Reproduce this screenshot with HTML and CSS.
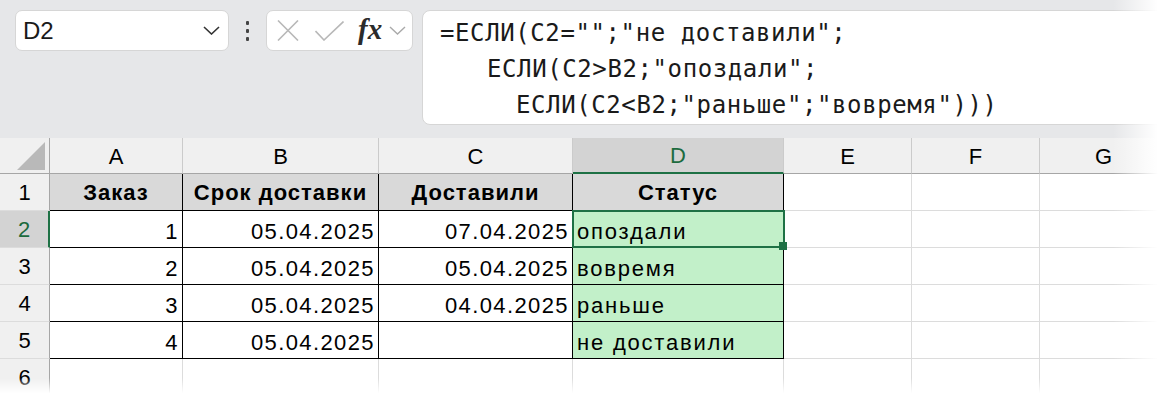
FILE: index.html
```html
<!DOCTYPE html>
<html lang="ru">
  <head>
    <meta charset="UTF-8" />
    <title>Статус доставки</title>
    <link rel="stylesheet" href="styles.css">
  </head>
  <body>
    <!-- formula bar -->
    <div class="toolbar">
      <div class="namebox">
        <span class="cellref">D2</span>
        <svg class="chev" width="17" height="9" viewBox="0 0 17 9"><polyline points="1,1 8.5,8 16,1" fill="none" stroke="#333" stroke-width="1.6"/></svg>
      </div>
      <div class="more"><span></span><span></span><span></span></div>
      <div class="fxbox">
        <svg class="ico-x" width="22" height="21" viewBox="0 0 22 21"><path d="M1 0.5 L21 20.5 M21 0.5 L1 20.5" stroke="#b8b8b8" stroke-width="1.6" fill="none"/></svg>
        <svg class="ico-ok" width="29" height="20" viewBox="0 0 29 20"><polyline points="0.5,10 9,19 28.5,0.5" fill="none" stroke="#b8b8b8" stroke-width="1.6"/></svg>
        <span class="fx">fx</span>
        <svg class="chev-sm" width="17" height="9" viewBox="0 0 17 9"><polyline points="1,1 8.5,8 16,1" fill="none" stroke="#aaa" stroke-width="1.4"/></svg>
      </div>
      <div class="formula">
        <div class="fline">=ЕСЛИ(C2="";"не доставили";</div>
        <div class="fline lvl1">ЕСЛИ(C2&gt;B2;"опоздали";</div>
        <div class="fline lvl2">ЕСЛИ(C2&lt;B2;"раньше";"вовремя")))</div>
      </div>
    </div>

    <!-- sheet -->
    <div class="sheet">
      <div class="hd corner">
        <svg width="29" height="28" viewBox="0 0 29 28"><polygon points="28,0 28,28 0,28" fill="#b9b9b9"/></svg>
      </div>
      <div class="hd col">A</div>
      <div class="hd col">B</div>
      <div class="hd col">C</div>
      <div class="hd col active-col">D</div>
      <div class="hd col">E</div>
      <div class="hd col">F</div>
      <div class="hd col">G</div>

      <div class="hd row">1</div>
      <div class="c tb title">Заказ</div>
      <div class="c tb title">Срок доставки</div>
      <div class="c tb title">Доставили</div>
      <div class="c tb title">Статус</div>
      <div class="c"></div>
      <div class="c"></div>
      <div class="c"></div>

      <div class="hd row active-row">2</div>
      <div class="c tb num">1</div>
      <div class="c tb num">05.04.2025</div>
      <div class="c tb num">07.04.2025</div>
      <div class="c tb ok selected">опоздали</div>
      <div class="c"></div>
      <div class="c"></div>
      <div class="c"></div>

      <div class="hd row">3</div>
      <div class="c tb num">2</div>
      <div class="c tb num">05.04.2025</div>
      <div class="c tb num">05.04.2025</div>
      <div class="c tb ok">вовремя</div>
      <div class="c"></div>
      <div class="c"></div>
      <div class="c"></div>

      <div class="hd row">4</div>
      <div class="c tb num">3</div>
      <div class="c tb num">05.04.2025</div>
      <div class="c tb num">04.04.2025</div>
      <div class="c tb ok">раньше</div>
      <div class="c"></div>
      <div class="c"></div>
      <div class="c"></div>

      <div class="hd row">5</div>
      <div class="c tb num">4</div>
      <div class="c tb num">05.04.2025</div>
      <div class="c tb num"></div>
      <div class="c tb ok">не доставили</div>
      <div class="c"></div>
      <div class="c"></div>
      <div class="c"></div>

      <div class="hd row">6</div>
      <div class="c"></div>
      <div class="c"></div>
      <div class="c"></div>
      <div class="c"></div>
      <div class="c"></div>
      <div class="c"></div>
      <div class="c"></div>
    </div>

    <div class="fade-right"></div>
    <div class="fade-bottom"></div>
  </body>
</html>
```

FILE: styles.css
```css
body {
  margin: 0;
  width: 1163px;
  height: 396px;
  overflow: hidden;
  position: relative;
  background: #fff;
  font-family: "Liberation Sans", Arial, sans-serif;
  color: #000;
}
.toolbar {
  display: flex;
  align-items: flex-start;
  box-sizing: border-box;
  height: 138px;
  padding: 10px 0 0 15px;
  background: #e6e7e9;
  overflow: hidden;
}
.namebox {
  display: flex;
  align-items: center;
  justify-content: space-between;
  box-sizing: border-box;
  width: 214px;
  height: 41px;
  padding: 0 8px 0 7px;
  background: #fff;
  border: 1px solid #d6d6d6;
  border-radius: 7px;
}
.cellref {
  font-size: 24px;
  color: #1a1a1a;
}
.more {
  width: 37px;
  height: 41px;
  display: flex;
  flex-direction: column;
  align-items: center;
  justify-content: center;
  gap: 4px;
}
.more span {
  width: 3px;
  height: 4px;
  background: #444;
  border-radius: 1px;
}
.fxbox {
  display: flex;
  align-items: center;
  box-sizing: border-box;
  width: 147px;
  height: 41px;
  padding-left: 10px;
  background: #fff;
  border: 1px solid #d6d6d6;
  border-radius: 7px;
}
.ico-ok {
  margin-left: 16px;
}
.fx {
  margin-left: 14px;
  font-family: "Liberation Serif", "DejaVu Serif", serif;
  font-style: italic;
  font-weight: bold;
  font-size: 29px;
  color: #2b2b2b;
  line-height: 1;
  margin-bottom: 2px;
}
.chev-sm {
  margin-left: 7px;
}
.formula {
  flex: 1;
  box-sizing: border-box;
  height: 115px;
  margin-left: 9px;
  margin-right: -12px;
  padding: 4px 0 0 17px;
  background: #fff;
  border: 1px solid #d6d6d6;
  border-radius: 8px;
  font-family: "DejaVu Sans Mono", "Liberation Mono", monospace;
  font-size: 24px;
  letter-spacing: 0.6px;
  color: #1a1a1a;
}
.fline {
  height: 36px;
  line-height: 36px;
  white-space: pre;
}
.lvl1 {
  padding-left: 47px;
}
.lvl2 {
  padding-left: 76px;
}

/* grid */
.sheet {
  display: grid;
  grid-template-columns: 50px 133px 196px 194px 211px 128px 128px 128px;
  grid-template-rows: 36px repeat(6, 37px);
  width: 1168px;
}
.hd {
  box-sizing: border-box;
  display: flex;
  align-items: center;
  justify-content: center;
  background: #f0f0f0;
  font-size: 22px;
  padding-top: 2px;
}
.corner {
  justify-content: flex-end;
  align-items: flex-end;
  padding: 0 3px 3px 0;
  border-right: 1px solid #a6a6a6;
  border-bottom: 1px solid #a6a6a6;
}
.col {
  border-right: 1px solid #cbcbcb;
  border-bottom: 1px solid #a6a6a6;
}
.row {
  border-right: 1px solid #a6a6a6;
  border-bottom: 1px solid #dcdcdc;
}
.active-col {
  background: #d3d3d3;
  color: #1c6b3e;
  border-bottom: 2px solid #1e7145;
}
.active-row {
  background: #d3d3d3;
  color: #1c6b3e;
  border-right: 2px solid #1e7145;
}
.c {
  box-sizing: border-box;
  display: flex;
  align-items: center;
  padding: 5px 4px 0 4px;
  border-right: 1px solid #dcdcdc;
  border-bottom: 1px solid #dcdcdc;
  font-size: 22px;
  letter-spacing: 1.4px;
  white-space: nowrap;
}
.tb {
  border-right-color: #000;
  border-bottom-color: #000;
}
.title {
  justify-content: center;
  padding-top: 2px;
  background: #d9d9d9;
  font-weight: bold;
  letter-spacing: 1px;
}
.num {
  justify-content: flex-end;
  padding-right: 3px;
}
.ok {
  background: #c2f0c9;
  letter-spacing: 1.8px;
}
.selected {
  position: relative;
}
.selected::after {
  content: "";
  position: absolute;
  top: -1px;
  left: -1px;
  right: -2px;
  bottom: -1px;
  border: 2px solid #1e7145;
}
.selected::before {
  content: "";
  position: absolute;
  right: -4px;
  bottom: -3px;
  width: 8px;
  height: 8px;
  background: #1e7145;
  z-index: 2;
}

/* edge fades of the screenshot */
.fade-right {
  position: absolute;
  top: 0;
  right: 0;
  width: 50px;
  height: 396px;
  background: linear-gradient(to right, rgba(255, 255, 255, 0), #fff 90%);
}
.fade-bottom {
  position: absolute;
  left: 0;
  right: 0;
  bottom: 0;
  height: 18px;
  background: linear-gradient(to bottom, rgba(255, 255, 255, 0), #fff 85%);
}
```
